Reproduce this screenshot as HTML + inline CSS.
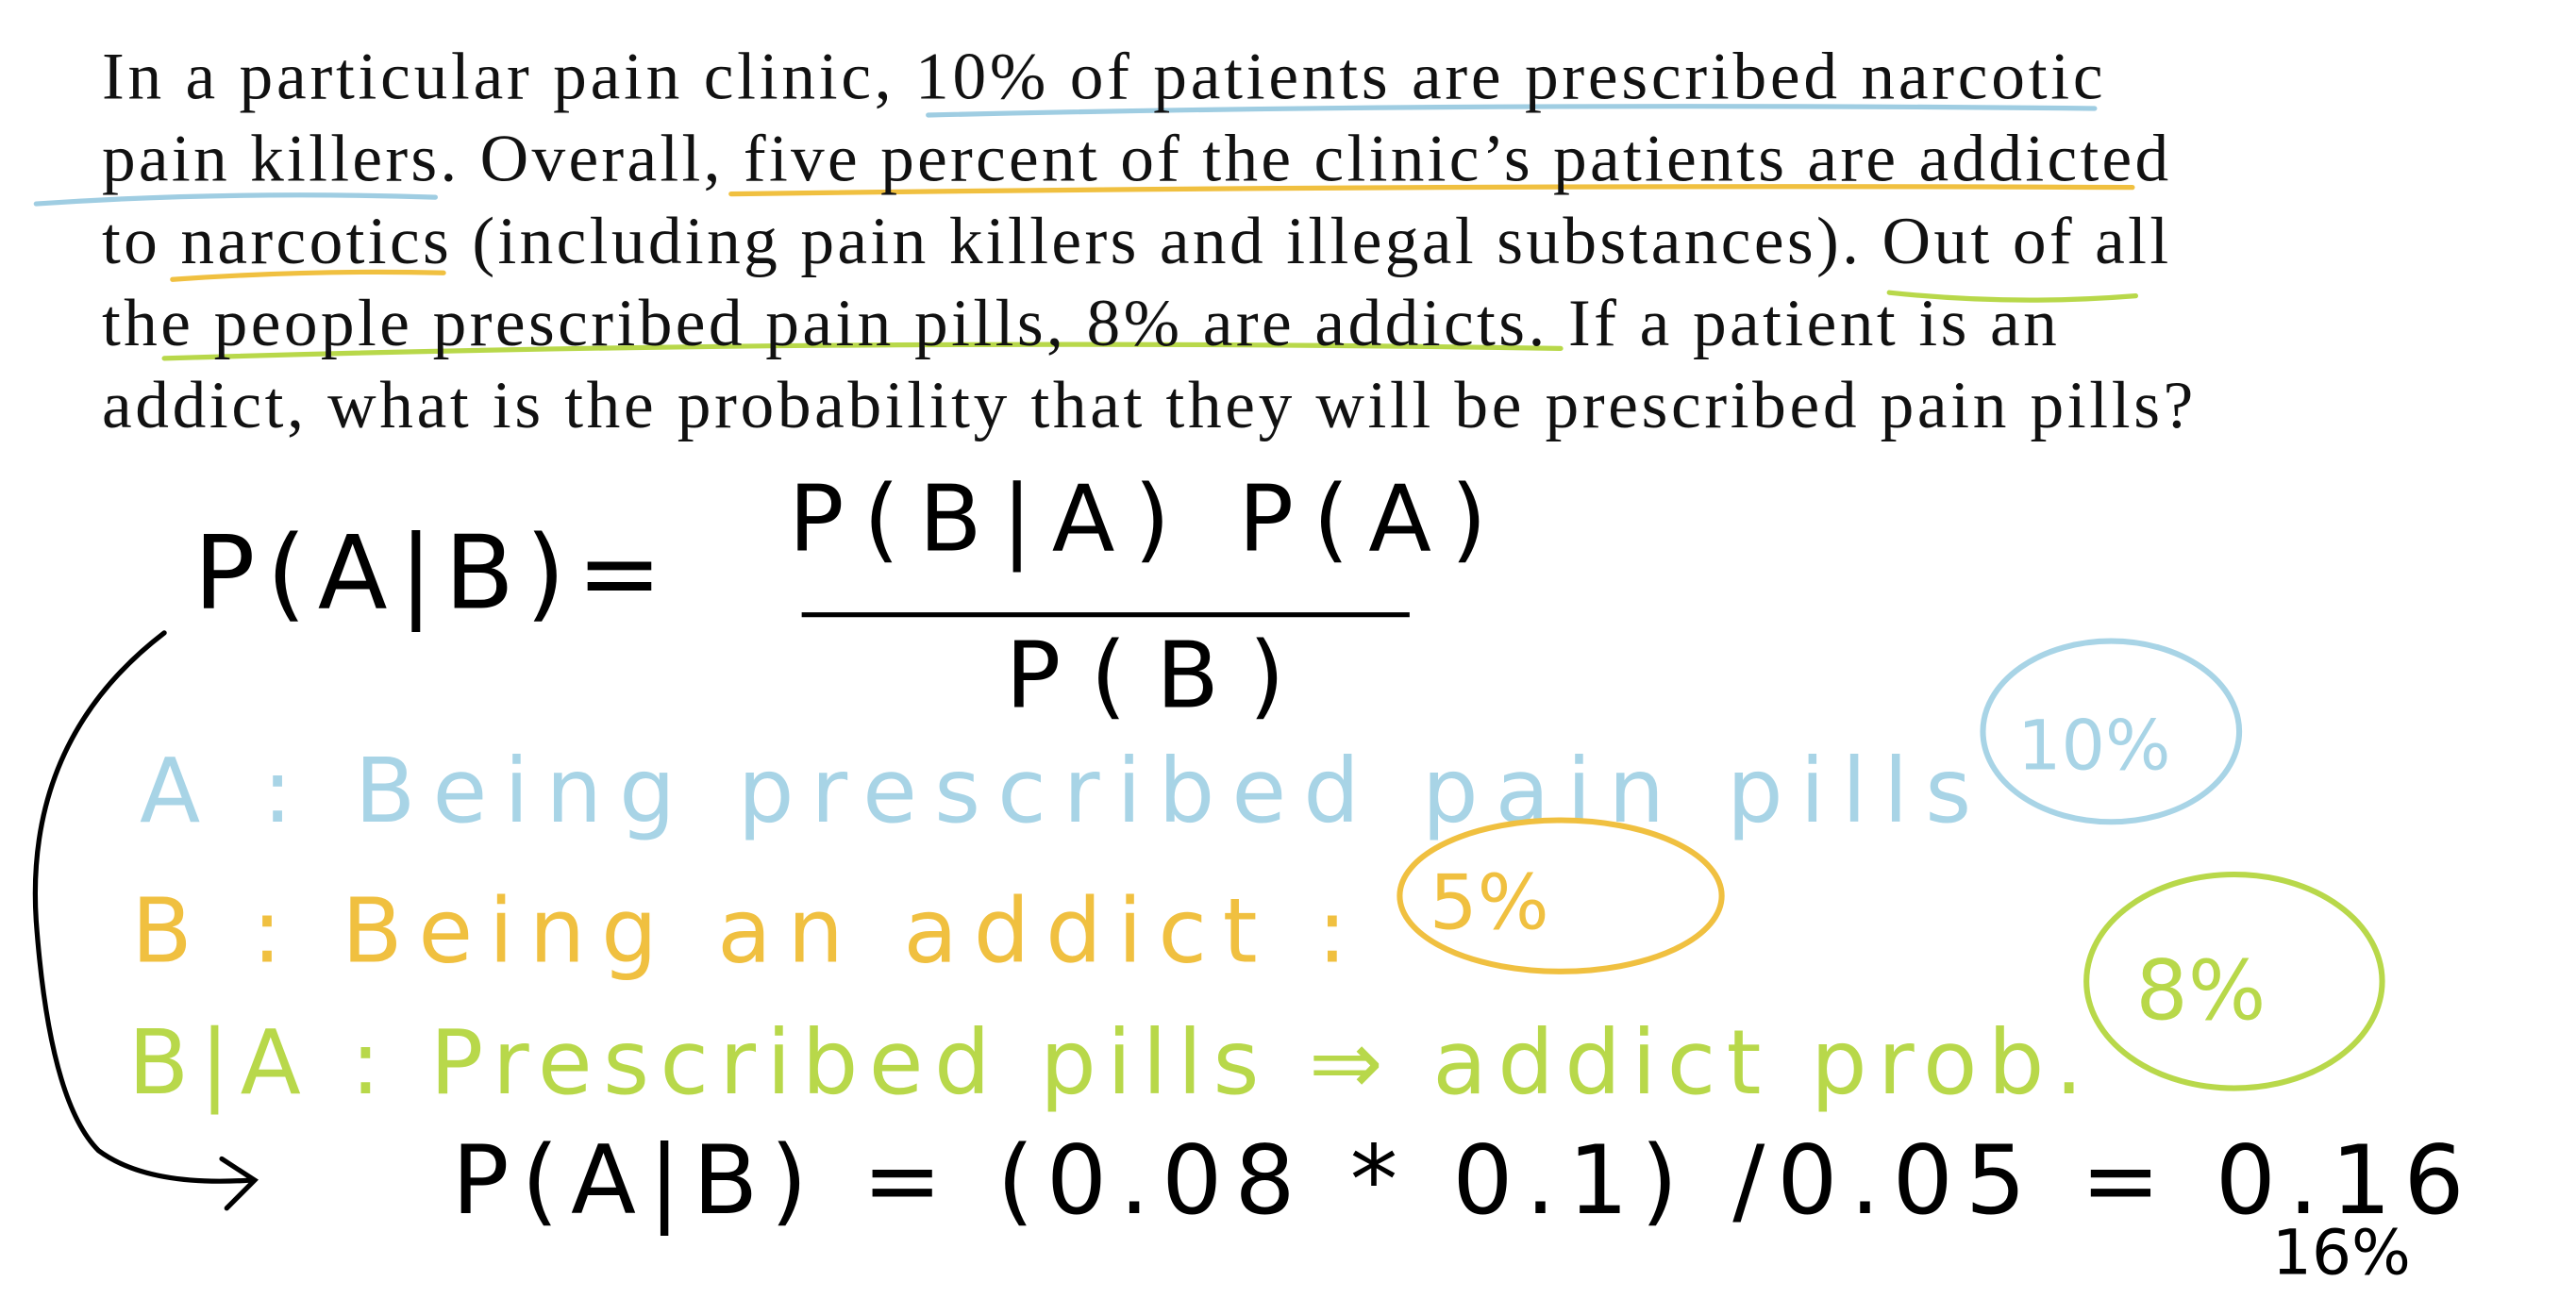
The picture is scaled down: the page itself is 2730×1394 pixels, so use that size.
<!DOCTYPE html>
<html><head><meta charset="utf-8"><style>
html,body{margin:0;padding:0;background:#fff;width:2730px;height:1394px;overflow:hidden}
svg{display:block}
.t{font-family:"Liberation Serif",serif;font-size:41px;fill:#111}
.h{font-family:"DejaVu Sans",sans-serif;font-weight:normal}
</style></head><body>
<svg width="2730" height="1394" viewBox="0 0 1568 800" preserveAspectRatio="none" xmlns="http://www.w3.org/2000/svg">
<rect width="1568" height="800" fill="#fff"/>
<g fill="none" stroke-linecap="round" stroke-width="3">
<path d="M565 70 Q900 62 1275 66" stroke="#9fcde2"/>
<path d="M22 124 Q140 116 265 120" stroke="#9fcde2"/>
<path d="M445 118 Q880 112 1298 114" stroke="#f0c040"/>
<path d="M105 170 Q190 164 270 166" stroke="#f0c040"/>
<path d="M1150 178 Q1225 186 1300 180" stroke="#b8d84a"/>
<path d="M100 218 Q520 205 950 212" stroke="#b8d84a"/>
</g>
<text class="t" x="62" y="60" textLength="1218">In a particular pain clinic, 10% of patients are prescribed narcotic</text>
<text class="t" x="62" y="110" textLength="1258">pain killers. Overall, five percent of the clinic’s patients are addicted</text>
<text class="t" x="62" y="160" textLength="1258">to narcotics (including pain killers and illegal substances). Out of all</text>
<text class="t" x="62" y="210" textLength="1190">the people prescribed pain pills, 8% are addicts. If a patient is an</text>
<text class="t" x="62" y="260" textLength="1273">addict, what is the probability that they will be prescribed pain pills?</text>

<g class="h" fill="#000">
<text x="118" y="370" font-size="62" textLength="285">P(A|B)=</text>
<text x="480" y="335" font-size="56" textLength="425">P(B|A)  P(A)</text>
<text x="612" y="430" font-size="56" textLength="170">P(B)</text>
<text x="275" y="738" font-size="58" textLength="1225">P(A|B) = (0.08 * 0.1) /0.05 = 0.16</text>
<text x="1383" y="775" font-size="38">16%</text>
</g>
<path d="M488 374 L858 374" stroke="#000" stroke-width="3"/>
<path d="M100 385 Q15 450 22 560 Q30 670 60 700 Q90 722 152 718 M135 705 L155 718 L138 735" fill="none" stroke="#000" stroke-width="3" stroke-linecap="round"/>

<g class="h">
<text x="85" y="500" font-size="54" fill="#a8d4e6" textLength="1115">A : Being prescribed pain pills</text>
<text x="1228" y="468" font-size="42" fill="#a8d4e6">10%</text>
<text x="80" y="585" font-size="54" fill="#f0c040" textLength="740">B : Being an addict :</text>
<text x="870" y="565" font-size="46" fill="#f0c040">5%</text>
<text x="78" y="665" font-size="54" fill="#b8d84a" textLength="1190">B|A : Prescribed pills ⇒ addict prob.</text>
<text x="1300" y="620" font-size="50" fill="#b8d84a">8%</text>
</g>
<g fill="none" stroke-width="3.5">
<ellipse cx="1285" cy="445" rx="78" ry="55" stroke="#a8d4e6"/>
<ellipse cx="950" cy="545" rx="98" ry="46" stroke="#f0c040"/>
<ellipse cx="1360" cy="597" rx="90" ry="65" stroke="#b8d84a"/>
</g>
</svg>
</body></html>
